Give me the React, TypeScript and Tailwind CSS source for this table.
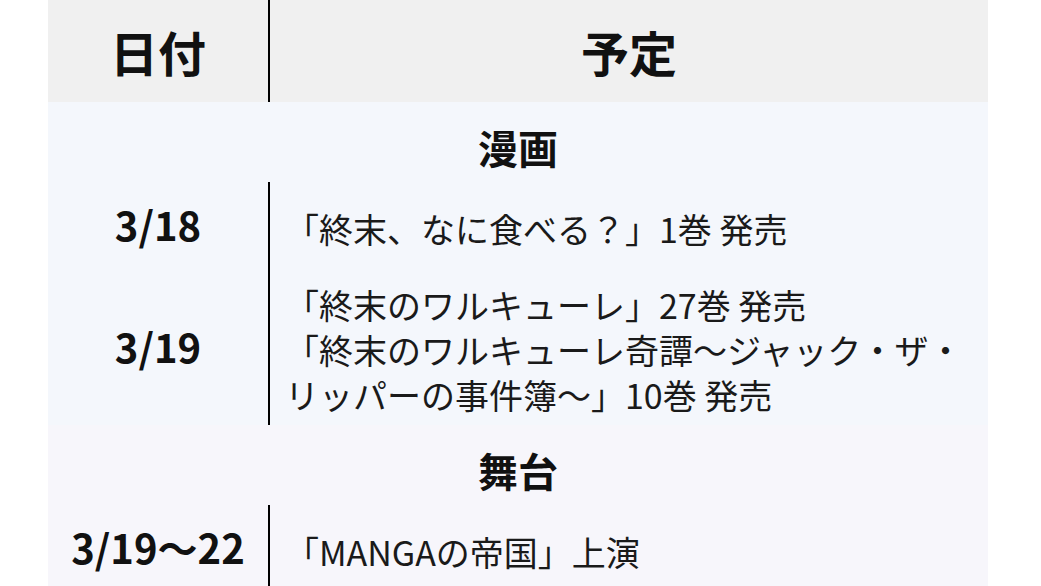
const font = "font-['Noto_Sans_CJK_JP','Noto_Sans',sans-serif]";

type Row = { date: string; lines: string[] };

const sections: { title: string; bg: string; rows: Row[] }[] = [
  {
    title: '漫画',
    bg: 'bg-[#f4f7fc]',
    rows: [
      { date: '3/18', lines: ['「終末、なに食べる？」1巻 発売'] },
      {
        date: '3/19',
        lines: [
          '「終末のワルキューレ」27巻 発売',
          '「終末のワルキューレ奇譚～ジャック・ザ・',
          'リッパーの事件簿～」10巻 発売',
        ],
      },
    ],
  },
  {
    title: '舞台',
    bg: 'bg-[#f7f6fb]',
    rows: [{ date: '3/19～22', lines: ['「MANGAの帝国」上演'] }],
  },
];

export default function App() {
  return (
    <div className={`min-h-screen bg-white ${font} text-[#111]`}>
      <div className="ml-[48px] w-[940px]">
        {/* header */}
        <div className="flex h-[102px] bg-[#f0f0f0]">
          <div className="flex w-[222px] items-center justify-center border-r-2 border-black text-[48px] font-bold leading-none">
            日付
          </div>
          <div className="flex flex-1 items-center justify-center text-[48px] font-bold leading-none">
            予定
          </div>
        </div>

        {sections.map((section) => (
          <div key={section.title} className={section.bg}>
            <div className="h-[80px] pt-[10px] text-center text-[40px] font-bold leading-[70px]">
              {section.title}
            </div>
            {section.rows.map((row) => (
              <div key={row.date} className="flex">
                <div className="flex w-[222px] items-center justify-center border-r-2 border-black pt-[4px] pb-[12px] text-[40px] font-bold leading-[76px]">
                  {row.date}
                </div>
                <div className="flex flex-1 flex-col justify-center py-2 pl-[15px] text-[34px] leading-[45px] text-[#1a1a1a]">
                  {row.lines.map((line) => (
                    <div key={line} className="whitespace-nowrap">
                      {line}
                    </div>
                  ))}
                </div>
              </div>
            ))}
          </div>
        ))}
      </div>
    </div>
  );
}
